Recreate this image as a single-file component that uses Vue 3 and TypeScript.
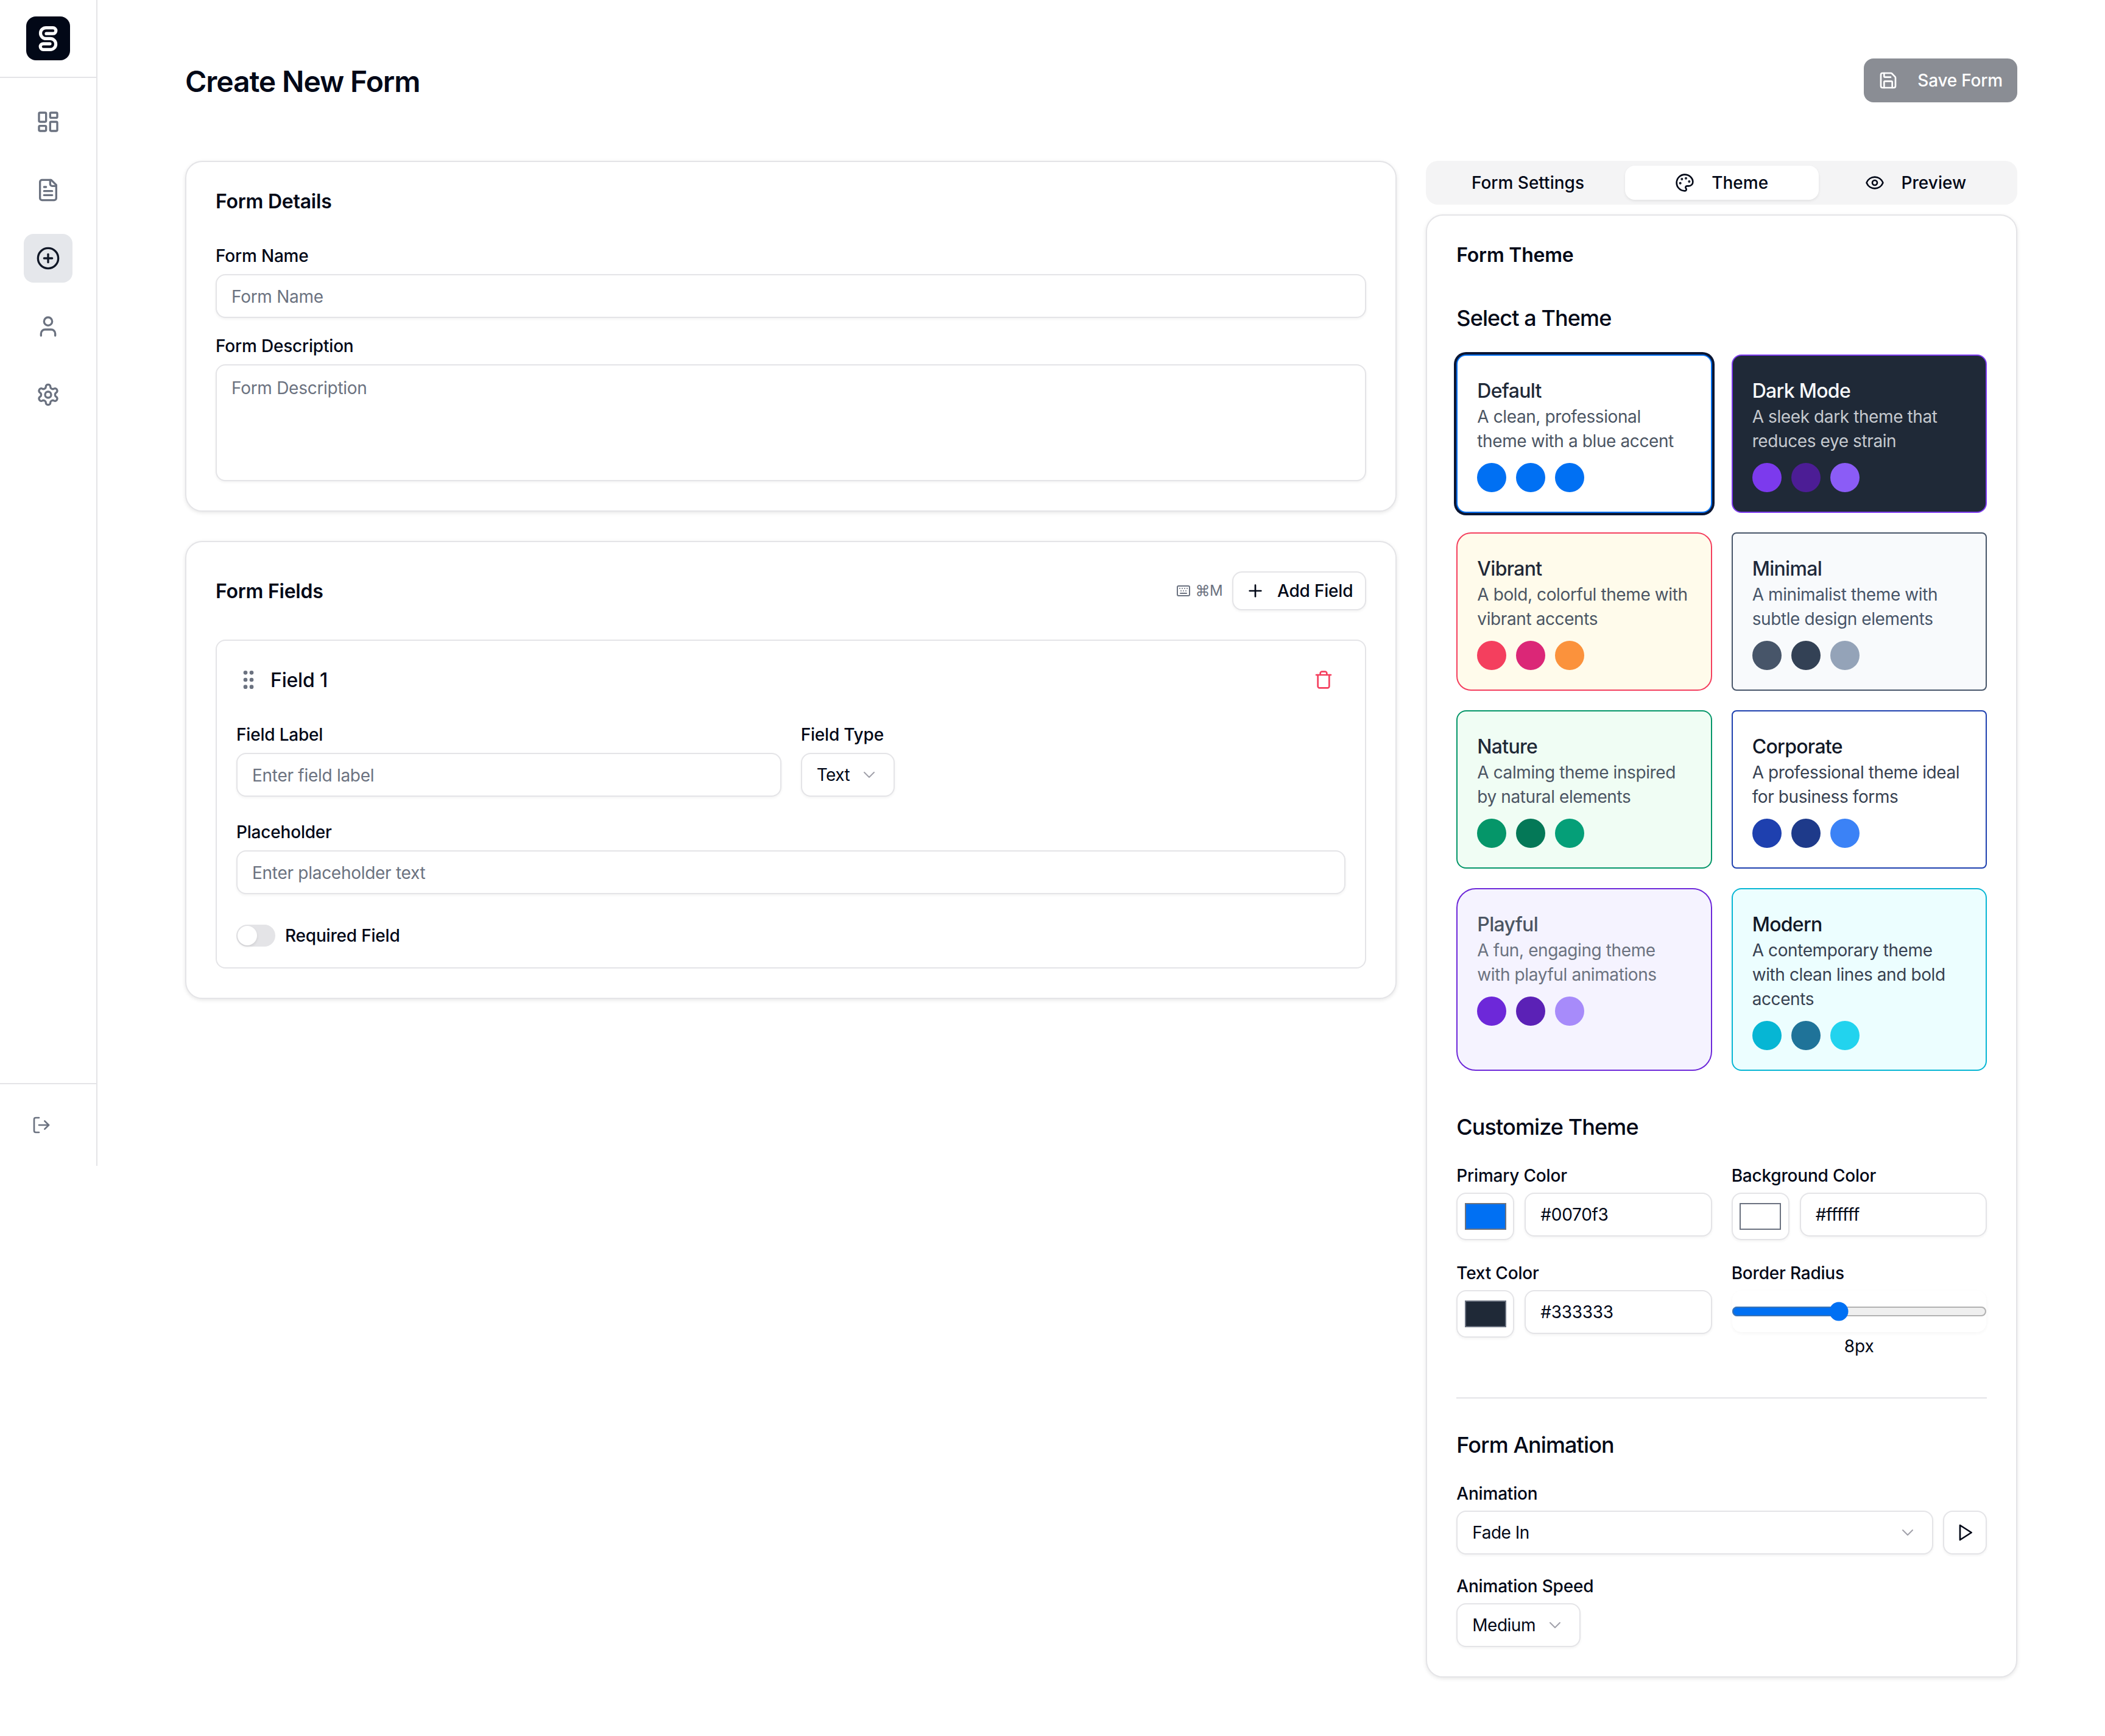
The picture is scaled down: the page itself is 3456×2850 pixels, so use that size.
<script setup lang="ts">
interface Theme {
  name: string;
  desc: string;
  bg: string;
  border: string;
  title: string;
  text: string;
  radius: number;
  dots: string[];
  selected?: boolean;
}

const themes: Theme[] = [
  { name: 'Default', desc: 'A clean, professional theme with a blue accent', bg: '#ffffff', border: '#0070f3', title: '#1f2937', text: '#4b5563', radius: 8, dots: ['#0070f3', '#0070f3', '#0070f3'], selected: true },
  { name: 'Dark Mode', desc: 'A sleek dark theme that reduces eye strain', bg: '#1f2937', border: '#7c3aed', title: '#f9fafb', text: '#c5c9cf', radius: 8, dots: ['#7c3aed', '#4c1d95', '#8b5cf6'] },
  { name: 'Vibrant', desc: 'A bold, colorful theme with vibrant accents', bg: '#fffbeb', border: '#f43f5e', title: '#1f2937', text: '#4b5563', radius: 12, dots: ['#f43f5e', '#db2777', '#fb923c'] },
  { name: 'Minimal', desc: 'A minimalist theme with subtle design elements', bg: '#f8fafc', border: '#475569', title: '#1e293b', text: '#475569', radius: 4, dots: ['#475569', '#334155', '#94a3b8'] },
  { name: 'Nature', desc: 'A calming theme inspired by natural elements', bg: '#f0fdf4', border: '#059669', title: '#1f2937', text: '#4b5563', radius: 8, dots: ['#059669', '#047857', '#059f78'] },
  { name: 'Corporate', desc: 'A professional theme ideal for business forms', bg: '#ffffff', border: '#1e40af', title: '#111827', text: '#374151', radius: 4, dots: ['#1e40af', '#1e3a8a', '#3b82f6'] },
  { name: 'Playful', desc: 'A fun, engaging theme with playful animations', bg: '#f5f3ff', border: '#6d28d9', title: '#4b5563', text: '#6b7280', radius: 16, dots: ['#6d28d9', '#5b21b6', '#a78bfa'] },
  { name: 'Modern', desc: 'A contemporary theme with clean lines and bold accents', bg: '#ecfeff', border: '#06b6d4', title: '#111827', text: '#374151', radius: 8, dots: ['#06b6d4', '#1f7399', '#22d3ee'] },
];
</script>

<template>
  <div class="app">
    <aside class="sidebar">
      <div class="sidebar-head">
        <div class="logo">
          <svg viewBox="0 0 36 36" width="36" height="36">
            <path d="M16.5 14.1H22a2.4 2.4 0 0 0 0-4.8H16.2a4.45 4.45 0 0 0 0 8.9h3.6a4.5 4.5 0 0 1 0 9H14a2.4 2.4 0 0 1 0-4.8h5.5" />
          </svg>
        </div>
      </div>
      <nav class="nav">
        <a class="nav-item">
          <svg class="icon-20" viewBox="0 0 24 24"><rect x="3" y="3" width="7" height="9" rx="1" /><rect x="14" y="3" width="7" height="5" rx="1" /><rect x="14" y="12" width="7" height="9" rx="1" /><rect x="3" y="16" width="7" height="5" rx="1" /></svg>
        </a>
        <a class="nav-item">
          <svg class="icon-20" viewBox="0 0 24 24"><path d="M15 2H6a2 2 0 0 0-2 2v16a2 2 0 0 0 2 2h12a2 2 0 0 0 2-2V7Z" /><path d="M14 2v4a2 2 0 0 0 2 2h4" /><path d="M10 9H8" /><path d="M16 13H8" /><path d="M16 17H8" /></svg>
        </a>
        <a class="nav-item active">
          <svg class="icon-20" viewBox="0 0 24 24"><circle cx="12" cy="12" r="10" /><path d="M8 12h8" /><path d="M12 8v8" /></svg>
        </a>
        <a class="nav-item">
          <svg class="icon-20" viewBox="0 0 24 24"><path d="M19 21v-2a4 4 0 0 0-4-4H9a4 4 0 0 0-4 4v2" /><circle cx="12" cy="7" r="4" /></svg>
        </a>
        <a class="nav-item">
          <svg class="icon-20" viewBox="0 0 24 24"><path d="M12.22 2h-.44a2 2 0 0 0-2 2v.18a2 2 0 0 1-1 1.73l-.43.25a2 2 0 0 1-2 0l-.15-.08a2 2 0 0 0-2.73.73l-.22.38a2 2 0 0 0 .73 2.73l.15.1a2 2 0 0 1 1 1.72v.51a2 2 0 0 1-1 1.74l-.15.09a2 2 0 0 0-.73 2.73l.22.38a2 2 0 0 0 2.73.73l.15-.08a2 2 0 0 1 2 0l.43.25a2 2 0 0 1 1 1.73V20a2 2 0 0 0 2 2h.44a2 2 0 0 0 2-2v-.18a2 2 0 0 1 1-1.73l.43-.25a2 2 0 0 1 2 0l.15.08a2 2 0 0 0 2.73-.73l.22-.39a2 2 0 0 0-.73-2.73l-.15-.08a2 2 0 0 1-1-1.74v-.5a2 2 0 0 1 1-1.74l.15-.09a2 2 0 0 0 .73-2.73l-.22-.38a2 2 0 0 0-2.73-.73l-.15.08a2 2 0 0 1-2 0l-.43-.25a2 2 0 0 1-1-1.73V4a2 2 0 0 0-2-2z" /><circle cx="12" cy="12" r="3" /></svg>
        </a>
      </nav>
      <div class="sidebar-foot">
        <svg class="icon-16 muted" viewBox="0 0 24 24"><path d="M9 21H5a2 2 0 0 1-2-2V5a2 2 0 0 1 2-2h4" /><path d="m16 17 5-5-5-5" /><path d="M21 12H9" /></svg>
      </div>
    </aside>

    <main class="main">
      <div class="content">
        <div class="page-head">
          <h1>Create New Form</h1>
          <button class="save-button">
            <svg class="icon-16" viewBox="0 0 24 24"><path d="M15.2 3a2 2 0 0 1 1.4.6l3.8 3.8a2 2 0 0 1 .6 1.4V19a2 2 0 0 1-2 2H5a2 2 0 0 1-2-2V5a2 2 0 0 1 2-2z" /><path d="M17 21v-7a1 1 0 0 0-1-1H8a1 1 0 0 0-1 1v7" /><path d="M7 3v4a1 1 0 0 0 1 1h7" /></svg>
            Save Form
          </button>
        </div>

        <div class="layout">
          <div class="left-col">
            <section class="card">
              <h2 class="card-title">Form Details</h2>
              <label class="label first">Form Name</label>
              <input class="input" placeholder="Form Name" />
              <label class="label second">Form Description</label>
              <textarea class="input textarea" placeholder="Form Description"></textarea>
            </section>

            <section class="card fields-card">
              <div class="fields-head">
                <h2 class="card-title">Form Fields</h2>
                <div class="fields-actions">
                  <span class="shortcut">
                    <svg class="icon-12" viewBox="0 0 24 24"><path d="M10 8h.01" /><path d="M12 12h.01" /><path d="M14 8h.01" /><path d="M16 12h.01" /><path d="M18 8h.01" /><path d="M6 8h.01" /><path d="M7 16h10" /><path d="M8 12h.01" /><rect x="2" y="4" width="20" height="16" rx="2" /></svg>
                    ⌘M
                  </span>
                  <button class="add-button">
                    <svg class="icon-16" viewBox="0 0 24 24"><path d="M5 12h14" /><path d="M12 5v14" /></svg>
                    Add Field
                  </button>
                </div>
              </div>

              <div class="field-card">
                <div class="field-head">
                  <div class="field-name">
                    <svg class="icon-20 grip" viewBox="0 0 24 24"><circle cx="9" cy="12" r="1" /><circle cx="9" cy="5" r="1" /><circle cx="9" cy="19" r="1" /><circle cx="15" cy="12" r="1" /><circle cx="15" cy="5" r="1" /><circle cx="15" cy="19" r="1" /></svg>
                    <span>Field 1</span>
                  </div>
                  <button class="trash-button">
                    <svg class="icon-16" viewBox="0 0 24 24"><path d="M3 6h18" /><path d="M19 6v14c0 1-1 2-2 2H7c-1 0-2-1-2-2V6" /><path d="M8 6V4c0-1 1-2 2-2h4c1 0 2 1 2 2v2" /></svg>
                  </button>
                </div>
                <div class="field-grid">
                  <div>
                    <label class="label">Field Label</label>
                    <input class="input" placeholder="Enter field label" />
                  </div>
                  <div>
                    <label class="label">Field Type</label>
                    <button class="select">
                      Text
                      <svg class="icon-16 chevron" viewBox="0 0 24 24"><path d="m6 9 6 6 6-6" /></svg>
                    </button>
                  </div>
                </div>
                <label class="label placeholder-label">Placeholder</label>
                <input class="input" placeholder="Enter placeholder text" />
                <div class="required-row">
                  <span class="toggle"><span class="toggle-thumb"></span></span>
                  <span class="required-text">Required Field</span>
                </div>
              </div>
            </section>
          </div>

          <div class="right-col">
            <div class="tabs">
              <div class="tab">Form Settings</div>
              <div class="tab active">
                <svg class="icon-16" viewBox="0 0 24 24"><path d="M12 22a1 1 0 0 1 0-20 10 9 0 0 1 10 9 5 5 0 0 1-5 5h-2.25a1.75 1.75 0 0 0-1.4 2.8l.3.4a1.75 1.75 0 0 1-1.4 2.8z" /><circle cx="13.5" cy="6.5" r=".5" fill="currentColor" /><circle cx="17.5" cy="10.5" r=".5" fill="currentColor" /><circle cx="6.5" cy="12.5" r=".5" fill="currentColor" /><circle cx="8.5" cy="7.5" r=".5" fill="currentColor" /></svg>
                Theme
              </div>
              <div class="tab">
                <svg class="icon-16" viewBox="0 0 24 24"><path d="M2.062 12.348a1 1 0 0 1 0-.696 10.75 10.75 0 0 1 19.876 0 1 1 0 0 1 0 .696 10.75 10.75 0 0 1-19.876 0" /><circle cx="12" cy="12" r="3" /></svg>
                Preview
              </div>
            </div>

            <section class="card theme-card">
              <h2 class="card-title">Form Theme</h2>
              <h3 class="section-title select-title">Select a Theme</h3>
              <div class="theme-grid">
                <div
                  v-for="theme in themes"
                  :key="theme.name"
                  class="theme-option"
                  :class="{ selected: theme.selected }"
                  :style="{ background: theme.bg, borderColor: theme.border, borderRadius: theme.radius + 'px' }"
                >
                  <div class="theme-name" :style="{ color: theme.title }">{{ theme.name }}</div>
                  <div class="theme-desc" :style="{ color: theme.text }">{{ theme.desc }}</div>
                  <div class="theme-dots">
                    <span v-for="(dot, i) in theme.dots" :key="i" class="dot" :style="{ background: dot }"></span>
                  </div>
                </div>
              </div>

              <h3 class="section-title customize-title">Customize Theme</h3>
              <div class="custom-grid">
                <div>
                  <label class="label">Primary Color</label>
                  <div class="color-row">
                    <div class="color-button"><span class="swatch primary"></span></div>
                    <input class="input" value="#0070f3" />
                  </div>
                </div>
                <div>
                  <label class="label">Background Color</label>
                  <div class="color-row">
                    <div class="color-button"><span class="swatch background"></span></div>
                    <input class="input" value="#ffffff" />
                  </div>
                </div>
                <div>
                  <label class="label">Text Color</label>
                  <div class="color-row">
                    <div class="color-button"><span class="swatch text"></span></div>
                    <input class="input" value="#333333" />
                  </div>
                </div>
                <div>
                  <label class="label">Border Radius</label>
                  <input class="range" type="range" min="0" max="20" step="0.01" value="8.3" />
                  <div class="range-value">8px</div>
                </div>
              </div>

              <hr class="divider" />

              <h3 class="section-title">Form Animation</h3>
              <label class="label animation-label">Animation</label>
              <div class="animation-row">
                <button class="select wide">
                  Fade In
                  <svg class="icon-16 chevron" viewBox="0 0 24 24"><path d="m6 9 6 6 6-6" /></svg>
                </button>
                <button class="play-button">
                  <svg class="icon-16" viewBox="0 0 24 24"><polygon points="6 3 20 12 6 21 6 3" /></svg>
                </button>
              </div>
              <label class="label speed-label">Animation Speed</label>
              <button class="select">
                Medium
                <svg class="icon-16 chevron" viewBox="0 0 24 24"><path d="m6 9 6 6 6-6" /></svg>
              </button>
            </section>
          </div>
        </div>
      </div>
    </main>
  </div>
</template>

<style>
body {
  margin: 0;
  background: #fff;
}
</style>

<style scoped>
.app {
  zoom: 2;
  width: 1728px;
  min-height: 1425px;
  display: flex;
  align-items: flex-start;
  font-family: Inter, "Liberation Sans", sans-serif;
  font-size: 14px;
  line-height: 20px;
  color: #020817;
}

svg {
  fill: none;
  stroke: currentColor;
  stroke-width: 2;
  stroke-linecap: round;
  stroke-linejoin: round;
  flex-shrink: 0;
}

.logo svg {
  display: block;
  stroke: #fff;
  stroke-width: 2.6;
}

.icon-12 { width: 12px; height: 12px; }
.icon-16 { width: 16px; height: 16px; }
.icon-20 { width: 20px; height: 20px; }
.muted { color: #6b7280; }

.sidebar {
  width: 80px;
  height: 957px;
  flex-shrink: 0;
  box-sizing: border-box;
  border-right: 1px solid #e4e4e7;
  display: flex;
  flex-direction: column;
}

.sidebar-head {
  height: 64px;
  box-sizing: border-box;
  border-bottom: 1px solid #e4e4e7;
  display: flex;
  align-items: center;
  justify-content: center;
}

.logo {
  width: 36px;
  height: 36px;
  border-radius: 8px;
  background: #020817;
}

.nav {
  flex: 1;
  padding-top: 16px;
  display: flex;
  flex-direction: column;
  align-items: center;
  gap: 16px;
}

.nav-item {
  width: 40px;
  height: 40px;
  border-radius: 8px;
  display: flex;
  align-items: center;
  justify-content: center;
  color: #6b7280;
}

.nav-item.active {
  background: #e5e7eb;
  color: #111827;
}

.sidebar-foot {
  height: 68px;
  box-sizing: border-box;
  border-top: 1px solid #e4e4e7;
  padding-left: 26px;
  display: flex;
  align-items: center;
}

.main {
  flex: 1;
  padding: 48px 0 49px;
}

.content {
  width: 1504px;
  margin: 0 auto;
}

.page-head {
  display: flex;
  align-items: center;
  justify-content: space-between;
  margin-bottom: 48px;
}

h1 {
  margin: 0;
  padding-top: 2px;
  font-size: 24px;
  line-height: 34px;
  font-weight: 600;
  letter-spacing: -0.55px;
}

.save-button {
  height: 36px;
  padding: 0 12px;
  display: flex;
  align-items: center;
  gap: 16px;
  border: none;
  border-radius: 8px;
  background: #8a8d94;
  color: #fff;
  font: inherit;
  font-weight: 500;
  letter-spacing: -0.1px;
}

.layout {
  display: grid;
  grid-template-columns: repeat(3, 1fr);
  gap: 24px;
}

.left-col {
  grid-column: span 2;
  display: flex;
  flex-direction: column;
  gap: 24px;
}

.card {
  border: 1px solid #e4e4e7;
  border-radius: 14px;
  padding: 20px 24px 24px;
  box-shadow: 0 1px 3px rgba(0, 0, 0, 0.1);
  background: #fff;
}

.card-title {
  margin: 0;
  padding-top: 1px;
  font-size: 16px;
  line-height: 23px;
  font-weight: 600;
  letter-spacing: -0.12px;
}

.label {
  display: block;
  margin-bottom: 5px;
  font-weight: 500;
  line-height: 20px;
  letter-spacing: -0.1px;
}

.label.first { margin-top: 23px; }
.label.second { margin-top: 13px; }

.input {
  display: block;
  width: 100%;
  height: 36px;
  box-sizing: border-box;
  padding: 1px 12px 0;
  border: 1px solid #e4e4e7;
  border-radius: 8px;
  box-shadow: 0 1px 2px rgba(0, 0, 0, 0.05);
  background: #fff;
  color: #020817;
  font: inherit;
  letter-spacing: -0.14px;
  outline: none;
}

.input::placeholder {
  color: #6b7280;
  opacity: 1;
}

.textarea {
  height: 96px;
  padding: 8.5px 12px;
  resize: none;
}

.fields-card {
  padding-top: 24px;
}

.fields-head {
  display: flex;
  align-items: center;
  justify-content: space-between;
  margin-bottom: 24px;
}

.fields-actions {
  display: flex;
  align-items: center;
  gap: 8px;
}

.shortcut {
  display: flex;
  align-items: center;
  gap: 4px;
  font-size: 12px;
  letter-spacing: -0.3px;
  color: #6b7280;
}

.add-button {
  height: 32px;
  padding: 0 10px;
  display: flex;
  align-items: center;
  gap: 10px;
  border: 1px solid #e4e4e7;
  border-radius: 8px;
  box-shadow: 0 1px 2px rgba(0, 0, 0, 0.05);
  background: #fff;
  color: inherit;
  font: inherit;
  font-weight: 500;
  letter-spacing: -0.1px;
}

.field-card {
  border: 1px solid #e4e4e7;
  border-radius: 8px;
  padding: 14px 16px 16px;
}

.field-head {
  display: flex;
  align-items: center;
  justify-content: space-between;
  margin-bottom: 17px;
}

.field-name {
  display: flex;
  align-items: center;
  gap: 8px;
  font-size: 16px;
  line-height: 24px;
  font-weight: 500;
  letter-spacing: -0.1px;
}

.field-name span {
  padding-top: 1px;
}

.grip {
  color: #6b7280;
}

.trash-button {
  width: 36px;
  height: 36px;
  display: flex;
  align-items: center;
  justify-content: center;
  border: none;
  background: none;
  color: #f43f5e;
  padding: 0;
}

.field-grid {
  display: grid;
  grid-template-columns: 1fr 1fr;
  gap: 16px;
}

.select {
  height: 36px;
  box-sizing: border-box;
  padding: 0 12px;
  display: inline-flex;
  align-items: center;
  justify-content: space-between;
  gap: 8px;
  border: 1px solid #e4e4e7;
  border-radius: 8px;
  box-shadow: 0 1px 2px rgba(0, 0, 0, 0.05);
  background: #fff;
  color: inherit;
  font: inherit;
  letter-spacing: -0.25px;
}

.select.wide {
  flex: 1;
}

.chevron {
  color: #a1a1aa;
  stroke-width: 1.5;
}

.placeholder-label {
  margin-top: 19px;
}

.required-row {
  display: flex;
  align-items: center;
  gap: 8px;
  margin-top: 24px;
}

.required-text {
  font-weight: 500;
  letter-spacing: -0.1px;
}

.toggle {
  width: 32px;
  height: 18px;
  border-radius: 9px;
  background: #e4e4e7;
  display: flex;
  align-items: center;
  padding-left: 1px;
  box-sizing: border-box;
}

.toggle-thumb {
  width: 16px;
  height: 16px;
  border-radius: 50%;
  background: #fff;
  box-shadow: 0 1px 2px rgba(0, 0, 0, 0.1);
}

.tabs {
  height: 36px;
  box-sizing: border-box;
  padding: 4px;
  margin-bottom: 8px;
  display: grid;
  grid-template-columns: repeat(3, 1fr);
  border-radius: 10px;
  background: #f4f4f5;
}

.tab {
  display: flex;
  align-items: center;
  justify-content: center;
  gap: 14px;
  border-radius: 8px;
  font-weight: 500;
}

.tab.active {
  background: #fff;
  box-shadow: 0 1px 2px rgba(0, 0, 0, 0.08);
}

.section-title {
  margin: 0;
  font-size: 18px;
  line-height: 28px;
  font-weight: 500;
  letter-spacing: -0.45px;
}

.select-title {
  margin-top: 26px;
  margin-bottom: 16px;
}

.theme-grid {
  display: grid;
  grid-template-columns: 1fr 1fr;
  gap: 16px;
}

.theme-option {
  border: 1px solid;
  padding: 16px;
}

.theme-option.selected {
  box-shadow: 0 0 0 2px #0b1633;
}

.theme-name {
  padding-top: 2px;
  font-size: 16px;
  line-height: 22px;
  font-weight: 500;
  letter-spacing: -0.35px;
}

.theme-desc {
  line-height: 20px;
  letter-spacing: -0.2px;
}

.theme-dots {
  display: flex;
  gap: 8px;
  margin-top: 8px;
}

.dot {
  width: 24px;
  height: 24px;
  border-radius: 50%;
}

.customize-title {
  margin-top: 32px;
  margin-bottom: 16px;
}

.custom-grid {
  display: grid;
  grid-template-columns: 1fr 1fr;
  gap: 17px 16px;
}

.custom-grid .label {
  margin-bottom: 4px;
}

.color-row {
  display: flex;
  align-items: flex-start;
  gap: 8.5px;
}

.color-row .input {
  flex: 1;
  min-width: 0;
  padding-top: 0;
}

.color-button {
  width: 47.5px;
  height: 39px;
  flex-shrink: 0;
  box-sizing: border-box;
  border: 1px solid #e4e4e7;
  border-radius: 8px;
  box-shadow: 0 1px 2px rgba(0, 0, 0, 0.05);
  display: flex;
  align-items: center;
  justify-content: center;
}

.swatch {
  width: 34px;
  height: 22px;
  box-sizing: border-box;
  border: 1px solid #6b7280;
}

.swatch.primary { background: #0070f3; }
.swatch.background { background: #fff; }
.swatch.text { background: #1f2937; }

.range {
  display: block;
  width: 100%;
  height: 35px;
  margin: 0;
  accent-color: #0070f3;
  border-radius: 8px;
  box-shadow: 0 1px 2px rgba(0, 0, 0, 0.03);
}

.range-value {
  margin-top: 1px;
  text-align: center;
}

.divider {
  margin: 32px 0 24px;
  border: none;
  border-top: 1px solid #e4e4e7;
}

.animation-label {
  margin-top: 16px;
  margin-bottom: 4px;
}

.animation-row {
  display: flex;
  gap: 8px;
}

.play-button {
  width: 36px;
  height: 36px;
  padding: 0;
  display: flex;
  align-items: center;
  justify-content: center;
  border: 1px solid #e4e4e7;
  border-radius: 8px;
  box-shadow: 0 1px 2px rgba(0, 0, 0, 0.05);
  background: #fff;
  color: inherit;
}

.speed-label {
  margin-top: 16px;
  margin-bottom: 4px;
}
</style>
